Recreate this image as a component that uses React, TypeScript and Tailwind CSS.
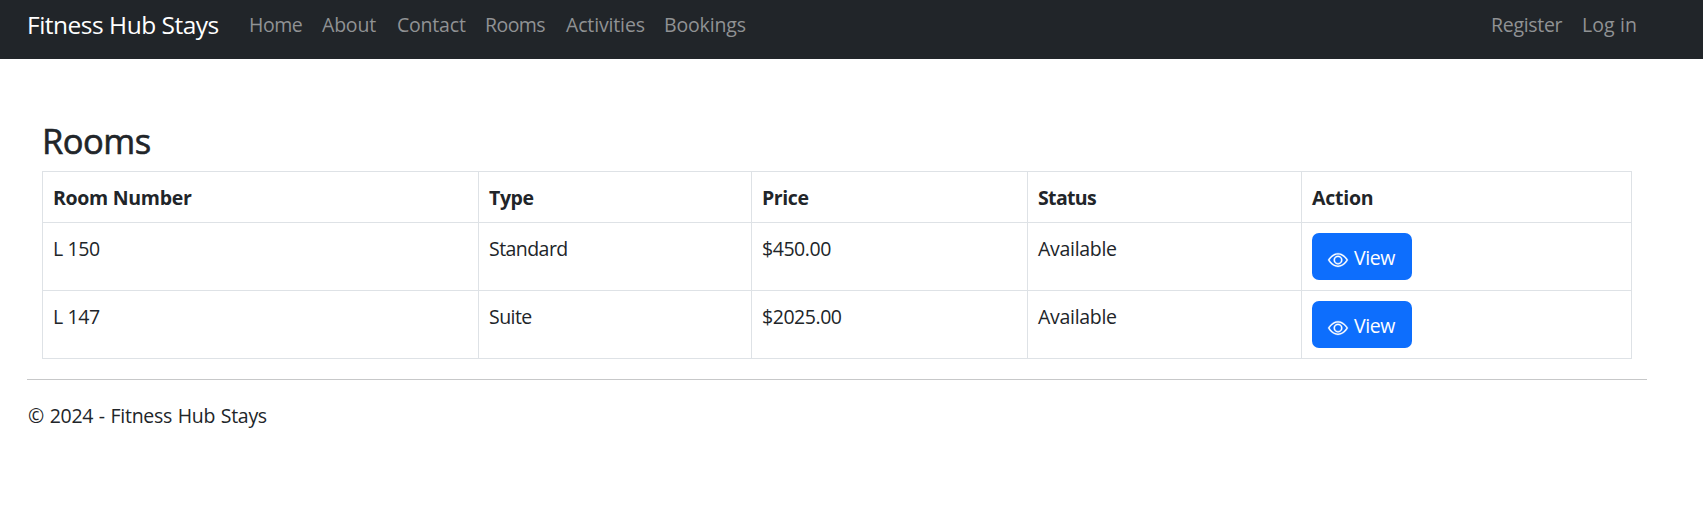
import React from "react";

const links = [
  { label: "Home", cls: "w-[73px] tracking-[-0.45px]" },
  { label: "About", cls: "w-[75px] tracking-[-0.2px]" },
  { label: "Contact", cls: "w-[88px] tracking-[-0.2px]" },
  { label: "Rooms", cls: "w-[81px] tracking-[-0.55px]" },
  { label: "Activities", cls: "w-[98px] tracking-[-0.15px]" },
  { label: "Bookings", cls: "w-[90px] tracking-[-0.15px]" },
];

const rooms = [
  { number: "L 150", type: "Standard", price: "$450.00", status: "Available" },
  { number: "L 147", type: "Suite", price: "$2025.00", status: "Available" },
];

const cell = "border border-[#dee2e6] px-[10px] pt-[11px] pb-[9px] align-top";

function Eye() {
  return (
    <svg width="20" height="20" viewBox="0 0 16 16" fill="currentColor" stroke="currentColor" strokeWidth="0.25" className="mt-[6px] mr-[6px] overflow-visible">
      <path d="M16 8s-3-5.5-8-5.5S0 8 0 8s3 5.5 8 5.5S16 8 16 8M1.173 8a13 13 0 0 1 1.66-2.043C4.12 4.668 5.88 3.5 8 3.5s3.879 1.168 5.168 2.457A13 13 0 0 1 14.828 8q-.086.13-.195.288c-.335.48-.83 1.12-1.465 1.755C11.879 11.332 10.119 12.5 8 12.5s-3.879-1.168-5.168-2.457A13 13 0 0 1 1.172 8z" />
      <path d="M8 5.5a2.5 2.5 0 1 0 0 5 2.5 2.5 0 0 0 0-5M4.5 8a3.5 3.5 0 1 1 7 0 3.5 3.5 0 0 1-7 0" />
    </svg>
  );
}

export default function App() {
  return (
    <div className="h-[509px] overflow-hidden bg-white font-['Open_Sans','Noto_Sans',sans-serif] text-[19.5px] leading-[30px] text-[#212529]">
      <nav className="flex h-[59px] items-start whitespace-nowrap bg-[#212529] pl-[27px] pt-[10px]">
        <a className="w-[222px] text-[24.5px] tracking-[-0.5px] text-white">Fitness Hub Stays</a>
        {links.map((l) => (
          <a key={l.label} className={`text-[#909294] ${l.cls}`}>{l.label}</a>
        ))}
        <a className="ml-auto w-[91px] tracking-[-0.3px] text-[#909294]">Register</a>
        <a className="w-[121px] tracking-[0.1px] text-[#909294]">Log in</a>
      </nav>
      <main className="px-[42px] pt-[62px]">
        <h1 className="h-[50px] text-[34.5px] font-medium leading-[39px] tracking-[-0.5px] [-webkit-text-stroke:0.6px_#212529]">Rooms</h1>
        <table className="w-[1590px] table-fixed border-collapse text-left tracking-[-0.4px]">
          <colgroup>
            <col className="w-[436px]" />
            <col className="w-[273px]" />
            <col className="w-[276px]" />
            <col className="w-[274px]" />
            <col className="w-[330px]" />
          </colgroup>
          <thead>
            <tr className="h-[51px] font-bold">
              <th className={`${cell} tracking-[-0.3px]`}>Room Number</th>
              <th className={cell}>Type</th>
              <th className={cell}>Price</th>
              <th className={`${cell} tracking-[-0.65px]`}>Status</th>
              <th className={`${cell} tracking-[-0.25px]`}>Action</th>
            </tr>
          </thead>
          <tbody>
            {rooms.map((r) => (
              <tr key={r.number} className="h-[68px]">
                <td className={cell}>{r.number}</td>
                <td className={`${cell} tracking-[-0.55px]`}>{r.type}</td>
                <td className={`${cell} tracking-[-0.45px]`}>{r.price}</td>
                <td className={`${cell} tracking-[-0.3px]`}>{r.status}</td>
                <td className="border border-[#dee2e6] p-[10px] align-top">
                  <button className="flex h-[47px] w-[100px] items-center rounded-[7px] bg-[#0d6efd] pl-[16px] tracking-[-0.4px] text-white">
                    <Eye />
                    <span className="pt-[2px]">View</span>
                  </button>
                </td>
              </tr>
            ))}
          </tbody>
        </table>
      </main>
      <footer className="ml-[27px] mt-[20px] w-[1620px] border-t border-[#c7c8c9] pl-px pt-[21px] tracking-[-0.3px] [word-spacing:1px]">
        © 2024 - Fitness Hub Stays
      </footer>
    </div>
  );
}
